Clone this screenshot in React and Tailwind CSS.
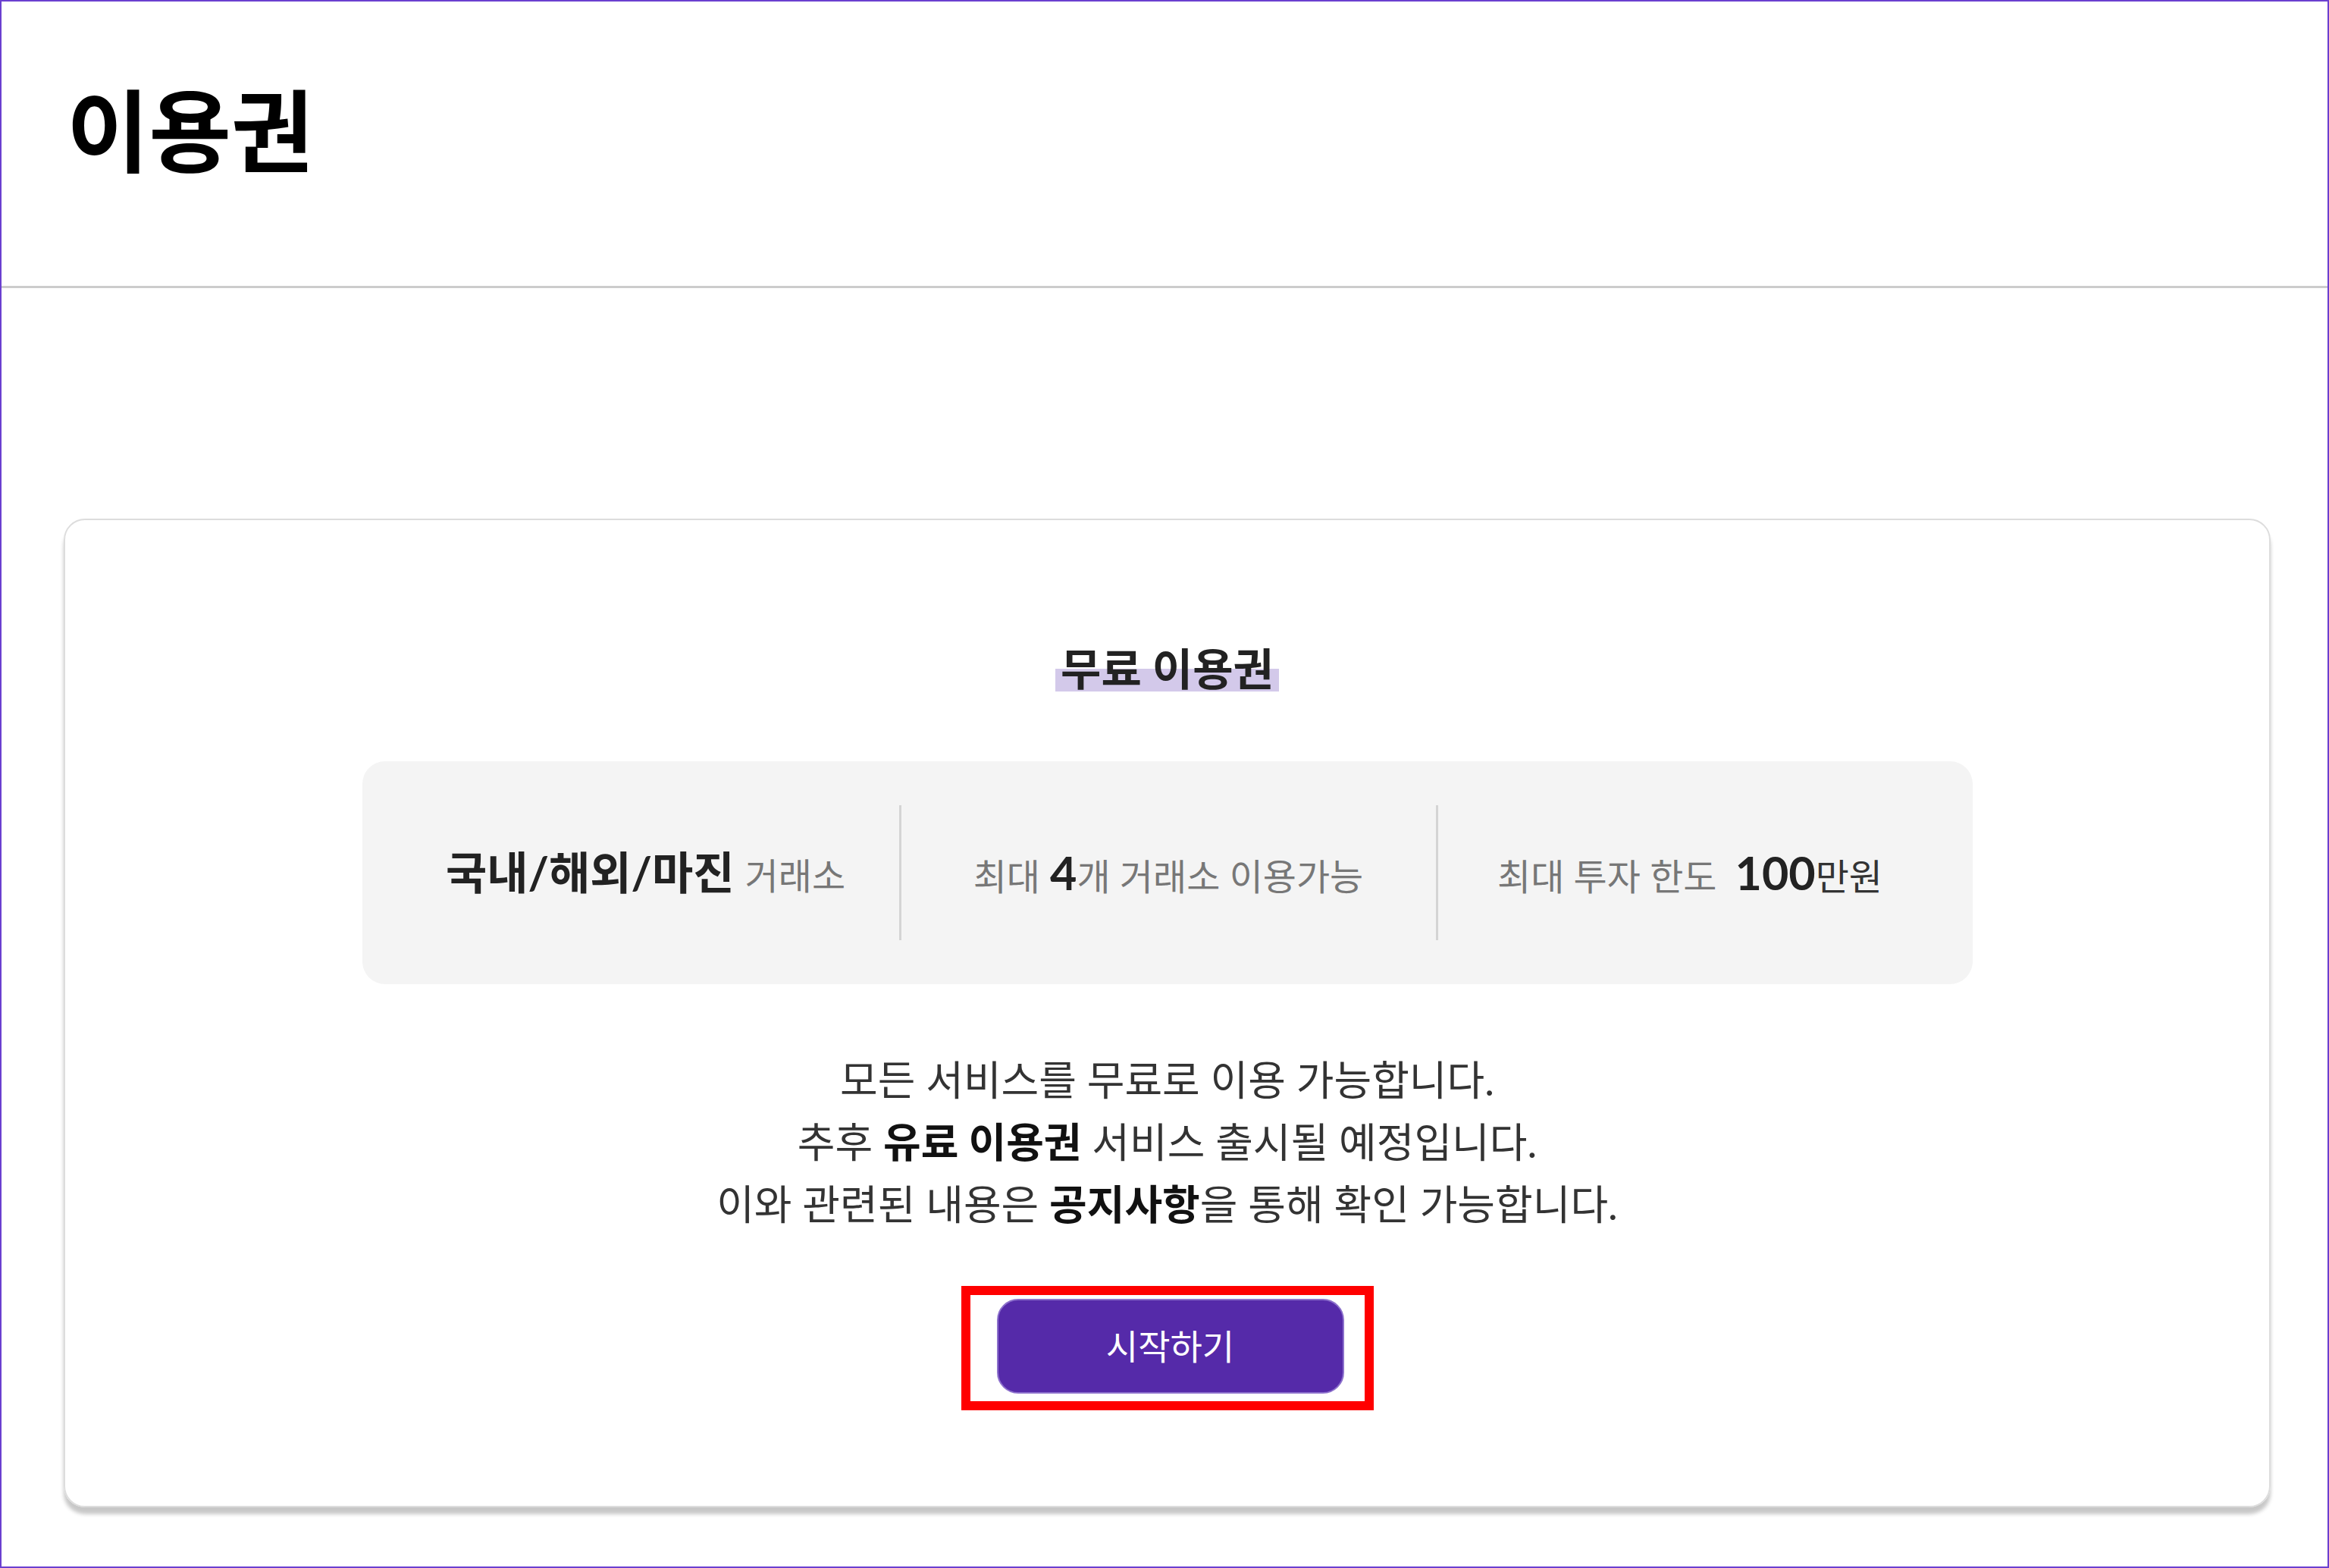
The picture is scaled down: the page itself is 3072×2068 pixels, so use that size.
import React from 'react'

const font = "font-['Lato','Noto_Sans_CJK_KR',sans-serif]"

function InfoBox() {
  return (
    <div className="mt-[92px] grid h-[294px] w-[2124px] grid-cols-3 items-center rounded-[30px] bg-[#f4f4f4]">
      <div className="flex items-baseline justify-center pl-[40px]">
        <span className="text-[59px] font-bold text-[#222]">국내/해외/마진</span>
        <span className="ml-[14px] text-[48px] text-[#777]">거래소</span>
      </div>
      <div className="flex h-[178px] items-center justify-center border-l-[3px] border-[#d4d4d4]">
        <div className="flex items-baseline">
          <span className="text-[48px] text-[#777]">최대</span>
          <span className="ml-[13px] text-[61px] font-bold text-[#222]">4</span>
          <span className="text-[48px] text-[#777]">개 거래소 이용가능</span>
        </div>
      </div>
      <div className="flex h-[178px] items-center justify-center border-l-[3px] border-[#d4d4d4] pr-[40px]">
        <div className="flex items-baseline">
          <span className="text-[48px] text-[#777]">최대 투자 한도</span>
          <span className="ml-[24px] text-[61px] font-bold text-[#222]">100</span>
          <span className="text-[48px] text-[#333]">만원</span>
        </div>
      </div>
    </div>
  )
}

export default function App() {
  return (
    <div className={`h-[2068px] w-full border-2 border-[#6a40d0] bg-white ${font}`}>
      <header className="h-[378px] border-b-[3px] border-[#cccccc] pl-[86px] pt-[112px]">
        <h1 className="text-[118px] font-bold leading-none text-black">이용권</h1>
      </header>

      <main className="pl-[82px] pr-[75px] pt-[304px]">
        <section className="flex flex-col items-center rounded-[28px] border-2 border-[#dddddd] pb-[126px] pt-[166px] shadow-[0_9px_5px_rgba(0,0,0,0.22)]">
          <h2 className="bg-[linear-gradient(transparent_50%,#d3c9ea_50%)] px-[7px] text-[58px] font-bold leading-[60px] text-[#222]">
            무료 이용권
          </h2>

          <InfoBox />

          <div className="mt-[86px] text-center text-[54px] leading-[82px] text-[#333]">
            <p>모든 서비스를 무료로 이용 가능합니다.</p>
            <p>
              추후 <b className="font-bold text-[#111]">유료 이용권</b> 서비스 출시될 예정입니다.
            </p>
            <p>
              이와 관련된 내용은 <b className="font-bold text-[#111]">공지사항</b>을 통해 확인 가능합니다.
            </p>
          </div>

          <div className="mt-[66px] border-[12px] border-[#ff0000] pb-[10px] pl-[35px] pr-[27px] pt-[5px]">
            <button className="flex h-[125px] w-[458px] items-center justify-center rounded-[28px] border-2 border-[#8c70cc] bg-[#552aa9] text-[46px] text-white">
              시작하기
            </button>
          </div>
        </section>
      </main>
    </div>
  )
}
